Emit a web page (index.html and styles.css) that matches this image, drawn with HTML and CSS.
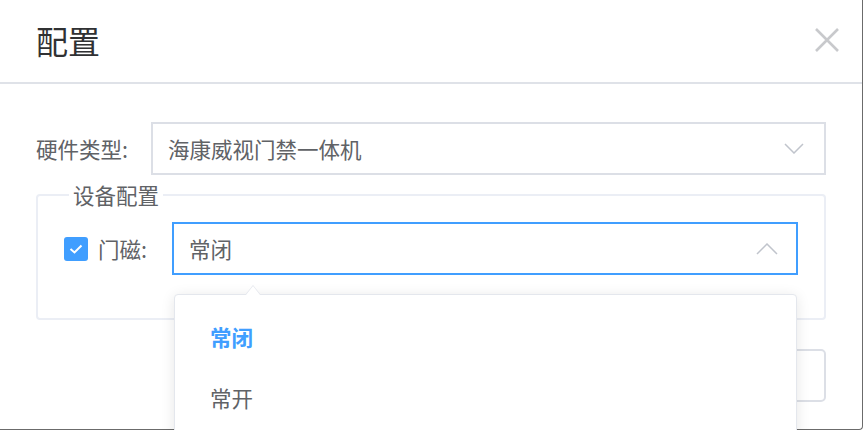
FILE: index.html
```html
<!DOCTYPE html>
<html lang="zh-CN">
<head>
    <meta charset="UTF-8">
    <meta name="viewport" content="width=device-width, initial-scale=1.0">
    <title>配置</title>
    <link rel="stylesheet" href="styles.css">
</head>
<body>
    <div class="dialog">
        <div class="dialog-header">
            <span class="dialog-title">配置</span>
            <button class="dialog-close" aria-label="关闭">
                <svg width="26" height="26" viewBox="0 0 26 26">
                    <path d="M2 2 L24 24 M24 2 L2 24" stroke="#c8c9cc" stroke-width="2.6" fill="none"/>
                </svg>
            </button>
        </div>

        <div class="dialog-body">
            <div class="form-row">
                <label class="form-label">硬件类型:</label>
                <div class="select">
                    <span class="select-value">海康威视门禁一体机</span>
                    <svg class="select-arrow" width="20" height="11" viewBox="0 0 20 11">
                        <path d="M1 1 L10 10 L19 1" stroke="#c0c4cc" stroke-width="1.5" fill="none"/>
                    </svg>
                </div>
            </div>

            <fieldset class="group">
                <legend>设备配置</legend>
                <div class="group-row">
                    <span class="checkbox">
                        <svg width="14" height="10" viewBox="0 0 14 10">
                            <path d="M1.5 5 L5.5 8.5 L12.5 1.5" stroke="#fff" stroke-width="2" fill="none"/>
                        </svg>
                    </span>
                    <label class="group-label">门磁:</label>
                    <div class="select select-open">
                        <span class="select-value">常闭</span>
                        <svg class="select-arrow" width="22" height="12" viewBox="0 0 22 12">
                            <path d="M1 11 L11 1 L21 11" stroke="#c0c4cc" stroke-width="1.5" fill="none"/>
                        </svg>
                        <ul class="dropdown">
                            <li class="dropdown-item selected">常闭</li>
                            <li class="dropdown-item">常开</li>
                        </ul>
                    </div>
                </div>
            </fieldset>

            <div class="dialog-footer">
                <button class="btn">确定</button>
            </div>
        </div>
    </div>
</body>
</html>
```

FILE: styles.css
```css
html, body {
    margin: 0;
    padding: 0;
    overflow: hidden;
    background-color: #ffffff;
}
body {
    font-family: "Noto Sans CJK SC", "Noto Sans", sans-serif;
    color: #606266;
}
.dialog {
    width: 863px;
    height: 430px;
    border-right: 1px solid #6b6b6b;
    border-bottom: 1px solid #6b6b6b;
    border-bottom-right-radius: 4px;
    box-sizing: border-box;
}
.dialog-header {
    height: 84px;
    box-sizing: border-box;
    border-bottom: 2px solid #dfe2e8;
    display: flex;
    align-items: center;
    justify-content: space-between;
    padding: 0 22px 2px 36px;
}
.dialog-title {
    font-size: 32px;
    line-height: 40px;
    color: #303133;
}
.dialog-close {
    border: none;
    background: none;
    padding: 0;
    display: flex;
}
.dialog-body {
    padding: 38px 36px 0 36px;
}
.form-row {
    display: flex;
    align-items: center;
}
.form-label {
    width: 115px;
    font-size: 21.5px;
}
.select {
    position: relative;
    flex: 1;
    height: 53px;
    box-sizing: border-box;
    border: 2px solid #dcdfe6;
    display: flex;
    align-items: center;
    justify-content: space-between;
    padding: 0 20px 0 15px;
    font-size: 21.5px;
}
.select-open {
    border-color: #409eff;
    padding-right: 18px;
}
.group {
    margin: 9px 0 0 0;
    padding: 16px 26px 43px 26px;
    border: 2px solid #ebeef5;
    border-radius: 4px;
}
.group legend {
    margin-left: 5px;
    padding: 0 4px;
    font-size: 21.5px;
    line-height: 22px;
}
.group-row {
    display: flex;
    align-items: center;
}
.checkbox {
    width: 24px;
    height: 24px;
    border-radius: 3px;
    background-color: #409eff;
    display: flex;
    align-items: center;
    justify-content: center;
    margin-right: 10px;
}
.group-label {
    width: 74px;
    font-size: 21.5px;
}
.dropdown {
    position: absolute;
    top: calc(100% + 21px);
    left: 0;
    right: -1px;
    height: 200px;
    margin: 0;
    padding: 11px 0 0 0;
    list-style: none;
    background-color: #ffffff;
    border: 1px solid #e4e7ed;
    border-radius: 4px;
    box-shadow: 0 2px 14px rgba(0, 0, 0, 0.1);
    z-index: 10;
}
.dropdown::before,
.dropdown::after {
    content: "";
    position: absolute;
    left: 70px;
    border: 6px solid transparent;
    border-top: none;
}
.dropdown::before {
    top: -10px;
    border-width: 0 8px 10px 8px;
    border-bottom-color: #e4e7ed;
}
.dropdown::after {
    top: -9px;
    left: 71px;
    border-width: 0 7px 9px 7px;
    border-bottom-color: #ffffff;
}
.dropdown-item {
    height: 61px;
    line-height: 61px;
    padding-left: 35px;
    font-size: 21.5px;
    color: #606266;
}
.dropdown-item.selected {
    color: #409eff;
    font-weight: bold;
}
.dialog-footer {
    display: flex;
    justify-content: flex-end;
    margin-top: 29px;
}
.btn {
    width: 120px;
    height: 53px;
    border: 2px solid #dcdfe6;
    border-radius: 5px;
    background-color: #ffffff;
    font-family: inherit;
    font-size: 20px;
    color: #606266;
}
```
